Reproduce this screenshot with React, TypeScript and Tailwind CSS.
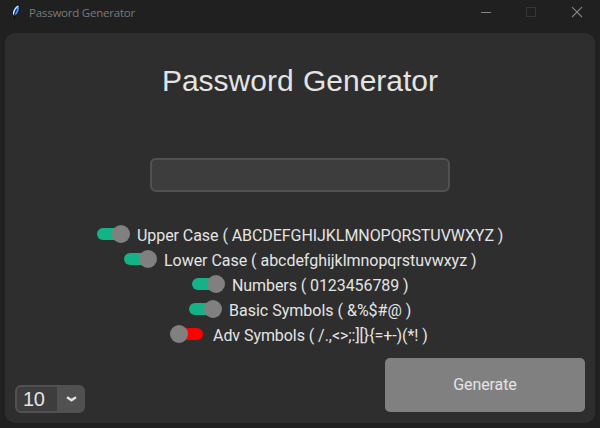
const options = [
  { label: 'Upper Case ( ABCDEFGHIJKLMNOPQRSTUVWXYZ )', on: true, pad: 'pl-[89px]', tracking: 'tracking-[-0.06px]' },
  { label: 'Lower Case ( abcdefghijklmnopqrstuvwxyz )', on: true, pad: 'pl-[116px]', tracking: 'tracking-[-0.035px]' },
  { label: 'Numbers ( 0123456789 )', on: true, pad: 'pl-[184px]', tracking: 'tracking-[-0.08px]' },
  { label: 'Basic Symbols ( &%$#@ )', on: true, pad: 'pl-[181px]', tracking: 'tracking-normal' },
  { label: 'Adv Symbols ( /.,<>;:][}{=+-)(*! )', on: false, pad: 'pl-[165px]', tracking: 'tracking-[-0.06px]' },
];

function Switch({ on }: { on: boolean }) {
  return (
    <span className="relative flex h-[18px] w-9 shrink-0 items-center px-[3px]">
      <span className={`h-3 w-full rounded-full ${on ? 'bg-[#14b387]' : 'bg-[#ff0000]'}`} />
      <span className={`absolute top-0 size-[18px] rounded-full bg-[#808080] ${on ? 'right-0' : 'left-0'}`} />
    </span>
  );
}

function TitleBar() {
  return (
    <header className="flex h-[33px] items-start justify-between bg-[#202020]">
      <div className="flex items-start pl-[11px]">
        <svg className="mt-1 h-4 w-2.5" viewBox="0 0 10 16">
          <path d="M8.3 .8C5 1.8 1.5 5.5 1.5 10.5L3 12.8C7 10.5 9.2 6 8.3 .8Z" fill="#4288dc" stroke="#080808" strokeWidth=".8" />
          <path d="M7 2C4.3 3.8 2.6 6.5 2.5 10.2" fill="none" stroke="#d8ecff" strokeWidth="1.3" />
          <path d="M6.8 4L6.5 7L4.6 10" fill="none" stroke="#4b95ee" strokeWidth="1.3" />
          <path d="M5.6 5L3.8 9.5L3.3 15" fill="none" stroke="#060606" strokeWidth=".8" />
        </svg>
        <span className="ml-2 mt-[5px] font-['Open_Sans',sans-serif] text-[11.5px] leading-4 tracking-[-0.22px] whitespace-nowrap text-[#7b7b7b]">
          Password Generator
        </span>
      </div>
      <svg className="h-6 w-[120px]" viewBox="0 0 120 24" fill="none">
        <path d="M1 12.5H11" stroke="#858585" />
        <rect x="46.5" y="7.5" width="9" height="9" stroke="#363636" />
        <path d="M92 7.2L102 17M102 7.2L92 17" stroke="#858585" strokeWidth="1.1" />
      </svg>
    </header>
  );
}

export default function App() {
  return (
    <div className="h-[428px] w-[600px] overflow-hidden bg-[#202020] font-[Roboto,sans-serif] text-[#dce4ee]">
      <TitleBar />
      <main className="mx-[5px] flex h-[390px] w-[590px] flex-col rounded-[10px] bg-[#2e2e2e]">
        <h1 className="mt-[30px] h-9 text-center font-['Liberation_Sans',sans-serif] text-[30px] leading-9 whitespace-nowrap text-[#e4e4e4] [word-spacing:1px]">
          Password Generator
        </h1>
        <input
          aria-label="Password"
          className="mt-[59px] h-[34px] w-[300px] shrink-0 self-center rounded-[6px] border-2 border-[#515151] bg-[#3d3d3d] px-2 outline-none"
        />
        <div className="mt-[29px] flex flex-col">
          {options.map((o) => (
            <div key={o.label} className={`flex h-[25px] items-center ${o.pad}`}>
              <Switch on={o.on} />
              <span className={`ml-[7px] pt-1 text-base leading-5 whitespace-nowrap text-[#e4e4e4] ${o.tracking}`}>{o.label}</span>
            </div>
          ))}
        </div>
        <div className="mt-3 flex items-end justify-between px-[10px]">
          <div className="-mb-px flex h-7 w-[70px] rounded-[6px] border-2 border-[#515151] bg-[#515151]">
            <span className="w-10 rounded-l-[4px] bg-[#3d3d3d] pl-[6px] font-['Liberation_Sans',sans-serif] text-[20px] leading-6 tracking-[-0.3px] text-[#e4e4e4]">
              10
            </span>
            <svg className="ml-[9px] mt-[8px] h-2 w-[11px]" viewBox="0 0 11 8" fill="none">
              <path d="M1.8 2.8L5.5 5.3L9.2 2.8" stroke="#e4e4e4" strokeWidth="2.4" strokeLinecap="round" strokeLinejoin="round" />
            </svg>
          </div>
          <button className="h-[54px] w-[200px] rounded-[5px] bg-[#808080] text-base tracking-[-0.1px] text-[#e4e4e4]">Generate</button>
        </div>
      </main>
    </div>
  );
}
